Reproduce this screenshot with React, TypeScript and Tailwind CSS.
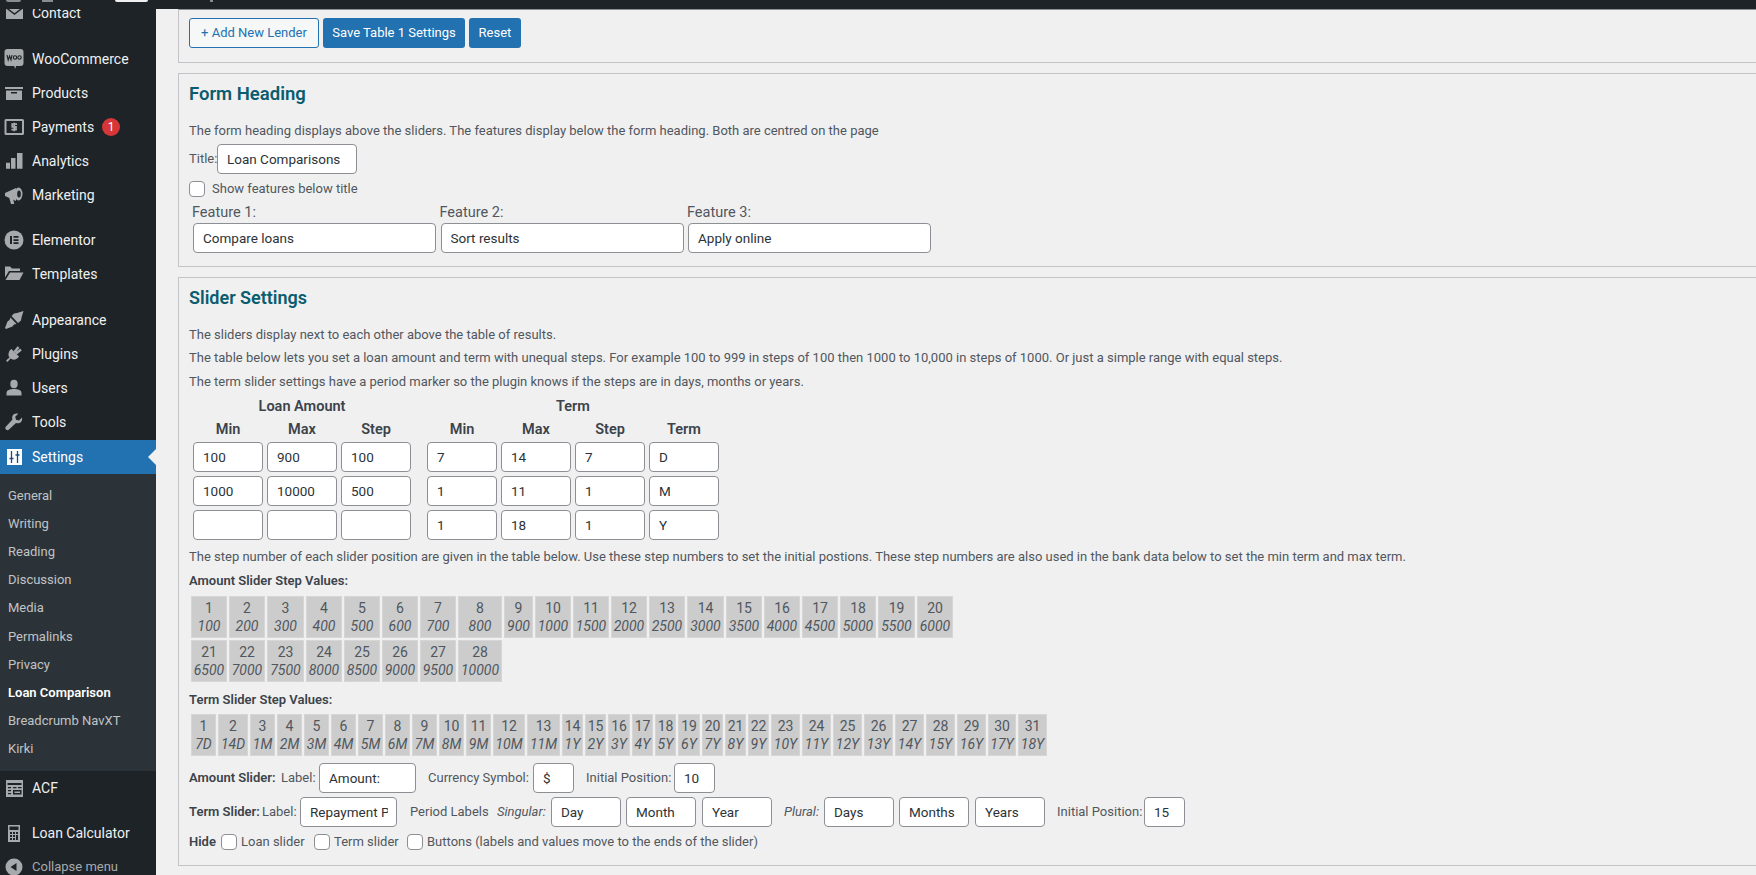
import React from 'react';

const GRAY = '#a7aaad';
const DARK = '#1d2327';

const icons: Record<string, React.ReactNode> = {
  mail: (
    <>
      <path d="M2 3h17v13H2z" fill={GRAY} />
      <path d="M2.5 5l8 6 8-6" fill="none" stroke={DARK} strokeWidth="1.4" />
    </>
  ),
  woo: (
    <>
      <rect x="0.5" y="0" width="19" height="17" rx="3" fill={GRAY} />
      <path d="M10 16l2.5 0-1.5 4z" fill={GRAY} />
      <path d="M3 6l1.2 5 1.4-4 1.4 4L8 6" fill="none" stroke={DARK} strokeWidth="1.1" />
      <circle cx="11" cy="8.5" r="1.7" fill="none" stroke={DARK} strokeWidth="1.1" />
      <circle cx="15.5" cy="8.5" r="1.7" fill="none" stroke={DARK} strokeWidth="1.1" />
    </>
  ),
  products: (
    <>
      <path d="M1 4h18v2H1z" fill={GRAY} />
      <path d="M2 7.5h16V17H2z" fill={GRAY} />
      <path d="M7 9h6v1.5H7z" fill={DARK} />
    </>
  ),
  payments: (
    <>
      <rect x="1.5" y="3" width="17.5" height="14" rx="0.5" fill="none" stroke={GRAY} strokeWidth="2" />
      <path d="M13 7.2H8.2v2.6h3.8v2.8H7.4M10.2 5.8v8.4" fill="none" stroke={GRAY} strokeWidth="1.7" />
    </>
  ),
  analytics: <path d="M2 11.7h4v6H2zM7 7h4.5v10.7H7zM13 2h5.5v15.7H13z" fill={GRAY} />,
  marketing: (
    <>
      <path d="M1 8l11-5v13L1 11z" fill={GRAY} />
      <ellipse cx="14.5" cy="9" rx="4" ry="6.5" fill={GRAY} />
      <ellipse cx="15" cy="9" rx="1.8" ry="3.5" fill={DARK} />
      <path d="M5 12l4 1 1.2 6H7z" fill={GRAY} />
    </>
  ),
  elementor: (
    <>
      <circle cx="10" cy="10" r="9.5" fill={GRAY} />
      <path d="M6 6h2v8H6zM9.5 6H14.5v1.7H9.5zM9.5 9.2H14.5v1.7H9.5zM9.5 12.3H14.5V14H9.5z" fill={DARK} />
    </>
  ),
  templates: (
    <>
      <path d="M1 2.5h5l2 2h8v2.5H5L1 13.5z" fill={GRAY} />
      <path d="M6 8.5h13.5l-4 7.5H1.5z" fill={GRAY} />
    </>
  ),
  appearance: (
    <>
      <path d="M10 3.5l3-.5 6.5-2-2 6.5-.5 3-3 2.5-6.5-7z" fill={GRAY} />
      <path d="M6.5 7.5l6 6.5-2.5.5-1.5 2-6.5 2.5-1-1 2.500-6.500 2-1.500z" fill={GRAY} />
    </>
  ),
  plugins: (
    <>
      <path d="M7.5 5L15 12.5c-1.5 3-6 4.2-8.5 2L3.5 18 2 16.5 5.5 13.5c-2-2.5-.8-7 2-8.5z" fill={GRAY} />
      <path d="M10.5 8L14.5 3M12 9.5L17 5.5" fill="none" stroke={GRAY} strokeWidth="2.4" />
    </>
  ),
  users: (
    <>
      <ellipse cx="10" cy="6" rx="3.7" ry="4.2" fill={GRAY} />
      <path d="M2.5 17.5v-2.5c0-3 3.5-4 7.5-4s7.5 1 7.5 4v2.5z" fill={GRAY} />
    </>
  ),
  tools: (
    <path
      d="M18 5.5l-3 3-3-.8-.8-3 3-3c-2.5-.8-5.5.2-6 3.3-.2 1 0 1.8.3 2.5L2 14.5c-1 1-.8 2.2 0 3 .8.8 2 1 3 0l7-6.5c.8.3 1.6.4 2.5.2 3-.5 4-3 3.5-5.7z"
      fill={GRAY}
    />
  ),
  settings: (
    <>
      <path d="M3 2h15v16H3z" fill="#ffffff" />
      <path d="M7.5 4v12M13.5 4v12" stroke="#1d4d7a" strokeWidth="1.3" fill="none" />
      <path d="M5.5 11.5h4M11.5 8h4" stroke="#1d4d7a" strokeWidth="1.6" fill="none" />
    </>
  ),
  acf: (
    <>
      <path d="M2 2h17v17H2z" fill={GRAY} />
      <path d="M3.5 5h14v2h-14zM4 9h3v1.3H4zM4 12h3v1.3H4zM4 15h3v1.3H4zM9 9h3.5v1.3H9zM14 9h3.5v1.3H14zM9 12h8.5v4.5H9z" fill={DARK} />
      <path d="M10.5 13.5h5.5v1.5h-5.5z" fill={GRAY} />
    </>
  ),
  calc: (
    <>
      <path d="M4 2h12v17H4z" fill={GRAY} />
      <path d="M5.5 3.5h9v3.5h-9zM6 9h2v2H6zM9 9h2v2H9zM12 9h2v2h-2zM6 12h2v2H6zM9 12h2v2H9zM12 12h2v5h-2zM6 15h2v2H6zM9 15h2v2H9z" fill={DARK} />
    </>
  ),
  collapse: (
    <>
      <circle cx="10" cy="10" r="8.5" fill={GRAY} />
      <path d="M12.5 6l-6 4 6 4z" fill={DARK} />
    </>
  ),
};

function MenuIcon({ name }: { name: string }) {
  return (
    <svg viewBox="0 0 20 20" className="ml-1 h-5 w-5 shrink-0">
      {icons[name]}
    </svg>
  );
}

function MenuItem({ icon, label, gap, badge }: { icon: string; label: string; gap?: string; badge?: boolean }) {
  return (
    <div className={`flex h-[34px] items-center gap-2 text-[14px] text-[#f0f0f1] ${gap ?? ''}`}>
      <MenuIcon name={icon} />
      <span>{label}</span>
      {badge && (
        <span className="flex h-[18px] w-[18px] items-center justify-center rounded-full bg-[#d63638] text-[12px] text-white">1</span>
      )}
    </div>
  );
}

function Sidebar() {
  const sub = ['General', 'Writing', 'Reading', 'Discussion', 'Media', 'Permalinks', 'Privacy', 'Loan Comparison', 'Breadcrumb NavXT', 'Kirki'];
  return (
    <aside className="h-[866px] w-[156px] shrink-0 overflow-hidden bg-[#1d2327]">
      <div className="mt-[-13px]">
        <MenuItem icon="mail" label="Contact" />
        <MenuItem icon="woo" label="WooCommerce" gap="mt-[12px]" />
        <MenuItem icon="products" label="Products" />
        <MenuItem icon="payments" label="Payments" badge />
        <MenuItem icon="analytics" label="Analytics" />
        <MenuItem icon="marketing" label="Marketing" />
        <MenuItem icon="elementor" label="Elementor" gap="mt-[11px]" />
        <MenuItem icon="templates" label="Templates" />
        <MenuItem icon="appearance" label="Appearance" gap="mt-[12px]" />
        <MenuItem icon="plugins" label="Plugins" />
        <MenuItem icon="users" label="Users" />
        <MenuItem icon="tools" label="Tools" />
        <div className="mt-[1px] flex h-[34px] items-center gap-2 bg-[#2271b1] text-[14px] text-white">
          <MenuIcon name="settings" />
          <span>Settings</span>
          <span className="ml-auto h-0 w-0 border-y-[8px] border-r-[8px] border-y-transparent border-r-[#f0f0f0]" />
        </div>
        <div className="h-[297px] bg-[#2c3338] pt-2">
          {sub.map(item => (
            <div
              key={item}
              className={`flex h-[28.1px] items-center pl-2 text-[13px] ${item === 'Loan Comparison' ? 'font-semibold text-white' : 'text-[#c0c3c6]'}`}
            >
              {item}
            </div>
          ))}
        </div>
        <MenuItem icon="acf" label="ACF" />
        <MenuItem icon="calc" label="Loan Calculator" gap="mt-[11px]" />
        <div className="flex h-[34px] items-center gap-2 text-[13px] text-[#a7aaad]">
          <MenuIcon name="collapse" />
          <span>Collapse menu</span>
        </div>
      </div>
    </aside>
  );
}

function Field({ value = '', className = '' }: { value?: string; className?: string }) {
  return (
    <input
      readOnly
      defaultValue={value}
      className={`h-[30px] rounded-[4px] border border-[#8c8f94] bg-white px-[9px] text-[13.5px] text-[#2c3338] outline-none ${className}`}
    />
  );
}

function Check() {
  return <input type="checkbox" readOnly className="h-4 w-4 shrink-0 appearance-none rounded-[4px] border border-[#8c8f94] bg-white" />;
}

function StepCell({ n, v }: { n: number; v: string }) {
  return (
    <div className="flex h-[42px] flex-col items-center justify-center border border-[#d6d6d6] bg-[#cccccc] text-[14px] leading-[18px] text-[#50575e]">
      <span>{n}</span>
      <span className="italic">{v}</span>
    </div>
  );
}

const amountValues = ['100', '200', '300', '400', '500', '600', '700', '800', '900', '1000', '1500', '2000', '2500', '3000', '3500', '4000', '4500', '5000', '5500', '6000', '6500', '7000', '7500', '8000', '8500', '9000', '9500', '10000'];
const termValues = ['7D', '14D', '1M', '2M', '3M', '4M', '5M', '6M', '7M', '8M', '9M', '10M', '11M', '1Y', '2Y', '3Y', '4Y', '5Y', '6Y', '7Y', '8Y', '9Y', '10Y', '11Y', '12Y', '13Y', '14Y', '15Y', '16Y', '17Y', '18Y'];

const sliderRows = [
  ['100', '900', '100', '7', '14', '7', 'D'],
  ['1000', '10000', '500', '1', '11', '1', 'M'],
  ['', '', '', '1', '18', '1', 'Y'],
];

export default function App() {
  const colsClass = 'ml-1 grid grid-cols-[70px_70px_70px_8px_70px_70px_70px_70px] gap-x-1';
  return (
    <div className="h-[875px] w-[1756px] overflow-hidden bg-[#f0f0f0] font-['Roboto',sans-serif] text-[13px] leading-5 text-[#50575e]">
      <div className="relative z-10 flex h-[9px] items-start bg-[#1d2327]">
        <span className="ml-[6px] h-[2px] w-[15px] rounded-b-full bg-[#8a8d90]" />
        <span className="ml-[21px] h-[2px] w-[11px] bg-[#8a8d90]" />
        <span className="ml-[62px] h-[2px] w-[33px] rounded-b-[2px] bg-[#f0f0f1]" />
        <span className="ml-[62px] h-[2px] w-[3px] bg-[#8a8d90]" />
      </div>
      <div className="flex">
        <Sidebar />
        <main className="min-w-0 flex-1 pl-[22px]">
          <section className="h-[54px] border-b border-l border-t border-b-[#c3c4c7] border-l-[#c3c4c7] border-t-[#8c8f94] pl-[10px] pt-2">
            <div className="flex gap-1">
              <button className="h-[30px] w-[130px] rounded-[3px] border border-[#2271b1] bg-[#f6f7f7] text-[#2271b1]">+ Add New Lender</button>
              <button className="h-[30px] w-[142px] rounded-[3px] bg-[#2271b1] text-white">Save Table 1 Settings</button>
              <button className="h-[30px] w-[52px] rounded-[3px] bg-[#2271b1] text-white">Reset</button>
            </div>
          </section>

          <section className="mt-[10px] h-[194px] border-y border-l border-[#c3c4c7] pl-[10px] pt-2">
            <h2 className="text-[18.5px] font-semibold leading-6 text-[#0a5c6e]">Form Heading</h2>
            <p className="mt-[15px]">The form heading displays above the sliders. The features display below the form heading. Both are centred on the page</p>
            <div className="mt-[3px] flex items-center">
              <label className="w-[28px]">Title:</label>
              <Field value="Loan Comparisons" className="w-[140px]" />
            </div>
            <label className="mt-[7px] flex h-4 items-center gap-[7px]">
              <Check />
              Show features below title
            </label>
            <div className="ml-1 mt-[6px] flex gap-[4.5px]">
              {[['Feature 1:', 'Compare loans'], ['Feature 2:', 'Sort results'], ['Feature 3:', 'Apply online']].map(([label, value]) => (
                <div key={label} className="w-[243px]">
                  <div className="-ml-[1px] text-[14.5px]">{label}</div>
                  <Field value={value} className="w-full" />
                </div>
              ))}
            </div>
          </section>

          <section className="mt-[10px] h-[589px] border-y border-l border-[#c3c4c7] pl-[10px] pt-2">
            <h2 className="text-[18px] font-semibold leading-6 text-[#0a5c6e]">Slider Settings</h2>
            <p className="mt-[15px]">The sliders display next to each other above the table of results.</p>
            <p className="mt-[3px]">The table below lets you set a loan amount and term with unequal steps. For example 100 to 999 in steps of 100 then 1000 to 10,000 in steps of 1000. Or just a simple range with equal steps.</p>
            <p className="mt-1">The term slider settings have a period marker so the plugin knows if the steps are in days, months or years.</p>

            <div className={`${colsClass} mt-[5px] gap-y-[3px] text-center text-[14.5px] font-semibold text-[#3c434a]`}>
              <div className="col-span-3">Loan Amount</div>
              <div />
              <div className="col-span-4">Term</div>
              <div>Min</div>
              <div>Max</div>
              <div>Step</div>
              <div />
              <div>Min</div>
              <div>Max</div>
              <div>Step</div>
              <div>Term</div>
            </div>
            <div className={`${colsClass} mt-[2px] gap-y-1`}>
              {sliderRows.map((row, r) =>
                row.map((value, c) => (
                  <React.Fragment key={`${r}-${c}`}>
                    {c === 3 && <div />}
                    <Field value={value} className="w-full" />
                  </React.Fragment>
                )),
              )}
            </div>

            <p className="mt-[7px]">The step number of each slider position are given in the table below. Use these step numbers to set the initial postions. These step numbers are also used in the bank data below to set the min term and max term.</p>
            <div className="mt-1 font-semibold text-[#3c434a]">Amount Slider Step Values:</div>
            <div className="ml-[2px] mt-[5px] grid w-max grid-cols-[36px_36px_37px_36px_36px_36px_36px_44px_29px_36px_36px_36px_36px_37px_36px_36px_36px_36px_37px_36px] gap-[2px]">
              {amountValues.map((v, i) => (
                <StepCell key={v} n={i + 1} v={v} />
              ))}
            </div>
            <div className="mt-2 font-semibold text-[#3c434a]">Term Slider Step Values:</div>
            <div className="ml-[2px] mt-1 grid w-max grid-cols-[25px_30px_25px_25px_25px_25px_25px_25px_25px_25px_25px_32px_33px_21px_21px_22px_21px_21px_22px_21px_21px_21px_29px_29px_29px_29px_29px_29px_29px_28px_29px] gap-[2px]">
              {termValues.map((v, i) => (
                <StepCell key={v} n={i + 1} v={v} />
              ))}
            </div>

            <div className="mt-[7px] flex items-center whitespace-nowrap">
              <span className="w-[92px] font-semibold text-[#3c434a]">Amount Slider:</span>
              <span className="w-[38px]">Label:</span>
              <Field value="Amount:" className="w-[97px]" />
              <span className="ml-3 w-[105px]">Currency Symbol:</span>
              <Field value="$" className="w-[41px]" />
              <span className="ml-3 w-[88px]">Initial Position:</span>
              <Field value="10" className="w-[41px]" />
            </div>
            <div className="mt-1 flex items-center whitespace-nowrap">
              <span className="w-[73px] font-semibold text-[#3c434a]">Term Slider:</span>
              <span className="w-[38px]">Label:</span>
              <Field value="Repayment Period" className="w-[97px] pr-[8px]" />
              <span className="ml-[13px] w-[87px]">Period Labels</span>
              <span className="w-[54px] italic">Singular:</span>
              <Field value="Day" className="w-[70px]" />
              <Field value="Month" className="ml-[5px] w-[70px]" />
              <Field value="Year" className="ml-[6px] w-[70px]" />
              <span className="ml-3 w-[40px] italic">Plural:</span>
              <Field value="Days" className="w-[70px]" />
              <Field value="Months" className="ml-[5px] w-[70px]" />
              <Field value="Years" className="ml-[6px] w-[70px]" />
              <span className="ml-3 w-[87px]">Initial Position:</span>
              <Field value="15" className="w-[41px]" />
            </div>
            <div className="mt-[7px] flex h-4 items-center whitespace-nowrap">
              <span className="w-[32px] font-semibold text-[#3c434a]">Hide</span>
              <span className="flex w-[93px] items-center gap-1"><Check />Loan slider</span>
              <span className="flex w-[93px] items-center gap-1"><Check />Term slider</span>
              <span className="flex items-center gap-1"><Check />Buttons (labels and values move to the ends of the slider)</span>
            </div>
          </section>
        </main>
      </div>
    </div>
  );
}
